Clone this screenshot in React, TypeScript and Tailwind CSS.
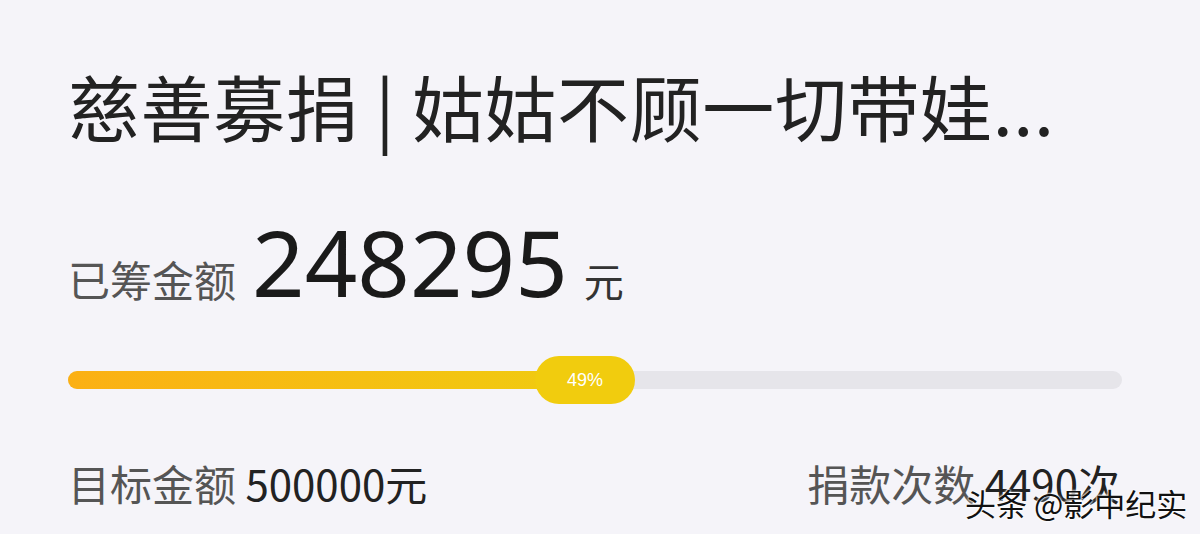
export default function App() {
  const cjk = { fontFamily: '"Noto Sans CJK SC", "Noto Sans", sans-serif' };
  return (
    <div className="w-[1200px] h-[534px] bg-[#f5f4f9] overflow-hidden relative" style={cjk}>
      <div className="pl-[68px] pr-[80px] pt-[62px]">
        <div className="text-[72px] leading-[86px] text-[#222] whitespace-nowrap tracking-[0.6px]">
          慈善募捐 | 姑姑不顾一切带娃...
        </div>
        <div className="mt-[68px] flex items-baseline whitespace-nowrap">
          <span className="text-[42px] leading-none text-[#555]">已筹金额</span>
          <span className="ml-[16px] text-[92px] leading-none text-[#1a1a1a]" style={{ fontFamily: '"Noto Sans", sans-serif' }}>248295</span>
          <span className="ml-[16px] text-[40px] leading-none text-[#333]">元</span>
        </div>
        <div className="mt-[48px] relative h-[48px] w-[1054px] flex items-center">
          <div className="w-full h-[18px] rounded-full bg-[#e6e5ea]" />
          <div className="absolute left-0 top-[15px] h-[18px] w-[510px] rounded-full bg-gradient-to-r from-[#fbb014] to-[#f0cb10]" />
          <div className="absolute left-[467px] top-0 h-[48px] w-[100px] rounded-full bg-[#f1cc0e] flex items-center justify-center text-white text-[18px]" style={{ fontFamily: '"Liberation Sans", sans-serif' }}>
            49%
          </div>
        </div>
        <div className="mt-[58px] flex justify-between items-baseline w-[1052px] whitespace-nowrap text-[42px] leading-none">
          <div>
            <span className="text-[#555]">目标金额 </span>
            <span className="text-[#222]">500000元</span>
          </div>
          <div>
            <span className="text-[#555]">捐款次数 </span>
            <span className="text-[#222]">4490次</span>
          </div>
        </div>
      </div>
      <div
        className="absolute left-[965px] top-[487px] text-[31px] leading-none text-[#111] whitespace-nowrap"
        style={{ textShadow: '0 0 2px #fff, 0 0 2px #fff, 0 0 3px #fff' }}
      >
        头条 @影中纪实
      </div>
    </div>
  );
}
